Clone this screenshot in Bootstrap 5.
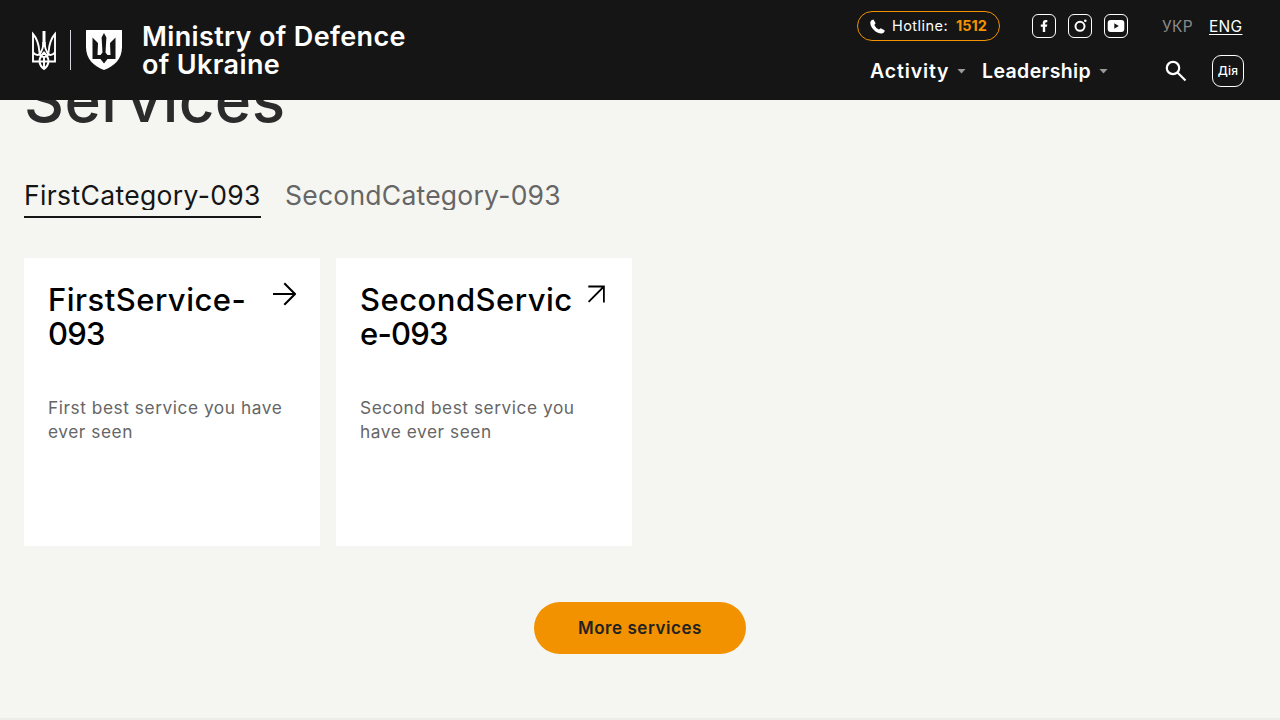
<!DOCTYPE html>
<html lang="en">
<head>
<meta charset="utf-8">
<meta name="viewport" content="width=device-width, initial-scale=1">
<title>Services – Ministry of Defence of Ukraine</title>
<link href="https://cdn.jsdelivr.net/npm/bootstrap@5.3.0/dist/css/bootstrap.min.css" rel="stylesheet">
<style>
body{font-family:Inter,"Noto Sans",sans-serif;background:#f5f6f1;color:#151515;height:720px;overflow:hidden}
a{color:inherit;text-decoration:none}
svg{display:block;flex:none}
.site-header{height:100px;background:#151515;color:#fff}
.brand-link{padding-left:31px}
.brand-divider{width:1px;height:40px;background:#d5d5dc;margin:0 15px 0 13px}
.brand-title{font-size:27px;line-height:28px;font-weight:580;letter-spacing:.36px;margin-left:20px;padding-top:1px}
.header-tools{width:423px;padding-top:11px}
.top-row{height:30px}
.hotline{width:143px;height:30px;border:1px solid #f39200;border-radius:15px;font-size:14.5px;letter-spacing:.45px;padding-left:12px}
.hotline b{font-weight:650;color:#f39200;letter-spacing:0}
.socials{margin-left:32px;gap:12px}
.lang{font-size:15.5px;letter-spacing:.3px;margin-left:34px;gap:16px;padding-top:1px}
.lang .active{text-decoration:underline;text-underline-offset:2px;text-decoration-thickness:1px}
.menu-row{height:32px;margin-top:14px;padding-left:13px;font-size:19.5px;font-weight:600}
.menu-link{padding-top:2px}
.caret{width:9px;height:5px;background:#9a9a9a;clip-path:polygon(0 0,100% 0,50% 100%);margin-left:8px}
.diia{width:32px;height:32px;border:1px solid #fff;border-radius:9px;font-size:12px;font-weight:500;letter-spacing:.2px}
.page-body{padding:0 24px}
.page-title{font-size:62px;line-height:60px;font-weight:470;letter-spacing:.4px;color:#2b2b2b;margin:-30px 0 52px}
.tab-link{font-size:26.5px;letter-spacing:.35px;height:36px;border-bottom:2px solid transparent;color:#666;white-space:nowrap}
.tab-link span{display:block;height:28px;line-height:27px;overflow:hidden}
.tab-link.active{color:#151515;border-color:#151515}
.tab-link.second{letter-spacing:.24px}
.service{width:296px;height:288px;background:#fff;padding:24px}
.service h2{width:214px;font-size:31px;line-height:34px;font-weight:450;letter-spacing:.48px;color:#000;height:114px;margin:0;padding-top:1px;white-space:nowrap}
.service h2 span{letter-spacing:-.8px}
.service p{font-size:17.3px;line-height:24px;letter-spacing:.55px;color:#666;margin:0;white-space:nowrap}
.more{width:212px;height:52px;border-radius:26px;background:#f39200;color:#222;font-size:17px;font-weight:600;letter-spacing:.55px;padding-top:2px}
.next-section{height:2px;background:#ecede8;margin-top:64px}
</style>
</head>
<body>
<header class="site-header position-relative z-1 d-flex align-items-start justify-content-between">
  <a href="#" class="brand-link d-flex align-items-center h-100">
    <svg width="26" height="40" viewBox="0 0 26 40" fill="none" stroke="#fff" stroke-width="1.9">
      <path d="M8.500 22.500C8 15 6.500 9 2 4V31.500H24V4C19.500 9 18 15 17.500 22.500"/>
      <path d="M13 1V17" stroke-width="3"/>
      <path d="M12.300 12C12.500 19 10.500 22 8 24.500C6 26 4 24.500 2 22.500M13.700 12C13.500 19 15.500 22 18 24.500C20 26 22 24.500 24 22.500"/>
      <path d="M8.500 22.500C8.500 26 10 27 13 27S17.500 26 17.500 22.500"/>
      <path d="M13 22.500C9.500 26 8.200 29 8.500 32C9 35.500 11 37.500 13 39C15 37.500 17 35.500 17.500 32C17.800 29 16.500 26 13 22.500ZM13 27V38"/>
    </svg>
    <span class="brand-divider"></span>
    <svg width="36" height="40" viewBox="0 0 36 40">
      <path fill="#fff" d="M0 0H36V17C36 29 28 36.500 18 40C8 36.500 0 29 0 17Z"/>
      <path fill="#151515" d="M18 3L20.400 7.500L19.500 22.500L21.500 25H24.500L24 13L29.500 7.500V29H21.500L18 33.500L14.500 29H6.500V7.500L12 13L11.500 25H14.500L16.500 22.500L15.600 7.500Z"/>
    </svg>
    <span class="brand-title">Ministry of Defence<br>of Ukraine</span>
  </a>
  <div class="header-tools">
    <div class="top-row d-flex align-items-center">
      <a href="#" class="hotline d-flex align-items-center">
        <svg width="15" height="15" viewBox="0 0 15 15"><path fill="#fff" d="M3.500 .4L5.600 4.200L4.300 5.900Q5.700 9 9 10.500L10.700 9.200L14.600 11.200Q14.800 13.800 12 14.500Q7.500 14.800 3.700 10.800Q0 7 .3 3Q1 .6 3.500 .4Z"/></svg>
        <span style="margin-left:7px">Hotline:</span><b class="ms-2">1512</b>
      </a>
      <div class="socials d-flex">
        <svg width="24" height="24" viewBox="0 0 24 24"><rect x=".5" y=".5" width="23" height="23" rx="5.500" fill="none" stroke="#fff"/><path fill="#fff" d="M10.800 18V12.800H8.800V10.400H10.800V9Q10.800 6 13.600 6H15.300V8.200H14.200Q13.200 8.200 13.200 9.200V10.400H15.300L14.900 12.800H13.200V18Z"/></svg>
        <svg width="24" height="24" viewBox="0 0 24 24"><rect x=".5" y=".5" width="23" height="23" rx="5.500" fill="none" stroke="#fff"/><circle cx="12" cy="12.300" r="4.500" fill="none" stroke="#fff" stroke-width="2"/><circle cx="17.300" cy="6.700" r="1.300" fill="#fff"/></svg>
        <svg width="24" height="24" viewBox="0 0 24 24"><rect x=".5" y=".5" width="23" height="23" rx="5.500" fill="none" stroke="#fff"/><rect x="3.700" y="6" width="16.600" height="12" rx="3" fill="#fff"/><path fill="#151515" d="M10.300 9.300V14.700L14.800 12Z"/></svg>
      </div>
      <div class="lang d-flex"><a href="#" style="color:#8b8b8b">УКР</a><a href="#" class="active">ENG</a></div>
    </div>
    <nav class="menu-row d-flex align-items-center">
      <a href="#" class="menu-link" style="width:79px;letter-spacing:.85px">Activity</a><span class="caret"></span>
      <a href="#" class="menu-link" style="width:109px;letter-spacing:.38px;margin-left:16px">Leadership</a><span class="caret"></span>
      <svg style="margin-left:57px" width="22" height="22" viewBox="0 0 22 22" fill="none" stroke="#fff" stroke-width="2.200"><circle cx="8" cy="8" r="6.200"/><path d="M12.500 12.500L20.500 20.500"/></svg>
      <a href="#" class="diia d-flex align-items-center justify-content-center" style="margin-left:25px">Дія</a>
    </nav>
  </div>
</header>
<main>
  <div class="page-body">
    <h1 class="page-title">Services</h1>
    <nav class="d-flex gap-4">
      <a href="#" class="tab-link active" style="width:237px"><span>FirstCategory-093</span></a>
      <a href="#" class="tab-link second" style="width:277px"><span>SecondCategory-093</span></a>
    </nav>
    <div class="d-flex gap-3" style="margin-top:40px">
      <a href="#" class="service">
        <div class="d-flex justify-content-between"><h2>FirstService-<br><span>093</span></h2>
          <svg width="24" height="24" viewBox="0 0 24 24" fill="none" stroke="#000" stroke-width="2"><path d="M1 12H23M12.300 1.300L23 12L12.300 22.700"/></svg></div>
        <p>First best service you have<br>ever seen</p>
      </a>
      <a href="#" class="service">
        <div class="d-flex justify-content-between"><h2>SecondServic<br><span>e-093</span></h2>
          <svg width="24" height="24" viewBox="0 0 24 24" fill="none" stroke="#000" stroke-width="1.800"><path d="M4.300 4.500H19.900V20.500M19.900 4.500L4.600 19.900"/></svg></div>
        <p>Second best service you<br>have ever seen</p>
      </a>
    </div>
    <div class="d-flex justify-content-center" style="margin-top:56px">
      <a href="#" class="more d-flex align-items-center justify-content-center">More services</a>
    </div>
  </div>
  <div class="next-section"></div>
</main>
<script src="https://cdn.jsdelivr.net/npm/bootstrap@5.3.0/dist/js/bootstrap.bundle.min.js"></script>
</body>
</html>
